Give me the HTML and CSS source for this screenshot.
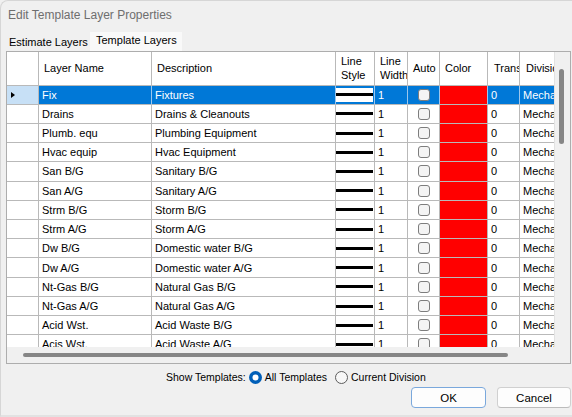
FILE: index.html
```html
<!DOCTYPE html>
<html>
<head>
<meta charset="utf-8">
<link rel="stylesheet" href="styles.css">
</head>
<body>
<div class="window">
  <div class="titlebar">Edit Template Layer Properties</div>
  <div class="tabs">
    <div class="tab">Estimate Layers</div>
    <div class="tab active">Template Layers</div>
  </div>
  <div class="page">
    <div class="grid">
      <div class="table">
        <div class="row head">
          <div class="cell rh"></div>
          <div class="cell">Layer Name</div>
          <div class="cell">Description</div>
          <div class="cell">Line Style</div>
          <div class="cell">Line Width</div>
          <div class="cell">Auto</div>
          <div class="cell">Color</div>
          <div class="cell nw">Transparency</div>
          <div class="cell nw">Division</div>
        </div>
        <div class="row sel">
          <div class="cell rh"><span class="arrow"></span></div>
          <div class="cell">Fix</div>
          <div class="cell">Fixtures</div>
          <div class="cell ls"><div class="lsimg"><span class="line"></span></div></div>
          <div class="cell">1</div>
          <div class="cell auto"><span class="cb"></span></div>
          <div class="cell color"></div>
          <div class="cell">0</div>
          <div class="cell">Mechanical</div>
        </div>
        <div class="row">
          <div class="cell rh"></div>
          <div class="cell">Drains</div>
          <div class="cell">Drains &amp; Cleanouts</div>
          <div class="cell ls"><div class="lsimg"><span class="line"></span></div></div>
          <div class="cell">1</div>
          <div class="cell auto"><span class="cb"></span></div>
          <div class="cell color"></div>
          <div class="cell">0</div>
          <div class="cell">Mechanical</div>
        </div>
        <div class="row">
          <div class="cell rh"></div>
          <div class="cell">Plumb. equ</div>
          <div class="cell">Plumbing Equipment</div>
          <div class="cell ls"><div class="lsimg"><span class="line"></span></div></div>
          <div class="cell">1</div>
          <div class="cell auto"><span class="cb"></span></div>
          <div class="cell color"></div>
          <div class="cell">0</div>
          <div class="cell">Mechanical</div>
        </div>
        <div class="row">
          <div class="cell rh"></div>
          <div class="cell">Hvac equip</div>
          <div class="cell">Hvac Equipment</div>
          <div class="cell ls"><div class="lsimg"><span class="line"></span></div></div>
          <div class="cell">1</div>
          <div class="cell auto"><span class="cb"></span></div>
          <div class="cell color"></div>
          <div class="cell">0</div>
          <div class="cell">Mechanical</div>
        </div>
        <div class="row">
          <div class="cell rh"></div>
          <div class="cell">San B/G</div>
          <div class="cell">Sanitary B/G</div>
          <div class="cell ls"><div class="lsimg"><span class="line"></span></div></div>
          <div class="cell">1</div>
          <div class="cell auto"><span class="cb"></span></div>
          <div class="cell color"></div>
          <div class="cell">0</div>
          <div class="cell">Mechanical</div>
        </div>
        <div class="row">
          <div class="cell rh"></div>
          <div class="cell">San A/G</div>
          <div class="cell">Sanitary A/G</div>
          <div class="cell ls"><div class="lsimg"><span class="line"></span></div></div>
          <div class="cell">1</div>
          <div class="cell auto"><span class="cb"></span></div>
          <div class="cell color"></div>
          <div class="cell">0</div>
          <div class="cell">Mechanical</div>
        </div>
        <div class="row">
          <div class="cell rh"></div>
          <div class="cell">Strm B/G</div>
          <div class="cell">Storm B/G</div>
          <div class="cell ls"><div class="lsimg"><span class="line"></span></div></div>
          <div class="cell">1</div>
          <div class="cell auto"><span class="cb"></span></div>
          <div class="cell color"></div>
          <div class="cell">0</div>
          <div class="cell">Mechanical</div>
        </div>
        <div class="row">
          <div class="cell rh"></div>
          <div class="cell">Strm A/G</div>
          <div class="cell">Storm A/G</div>
          <div class="cell ls"><div class="lsimg"><span class="line"></span></div></div>
          <div class="cell">1</div>
          <div class="cell auto"><span class="cb"></span></div>
          <div class="cell color"></div>
          <div class="cell">0</div>
          <div class="cell">Mechanical</div>
        </div>
        <div class="row">
          <div class="cell rh"></div>
          <div class="cell">Dw B/G</div>
          <div class="cell">Domestic water B/G</div>
          <div class="cell ls"><div class="lsimg"><span class="line"></span></div></div>
          <div class="cell">1</div>
          <div class="cell auto"><span class="cb"></span></div>
          <div class="cell color"></div>
          <div class="cell">0</div>
          <div class="cell">Mechanical</div>
        </div>
        <div class="row">
          <div class="cell rh"></div>
          <div class="cell">Dw A/G</div>
          <div class="cell">Domestic water A/G</div>
          <div class="cell ls"><div class="lsimg"><span class="line"></span></div></div>
          <div class="cell">1</div>
          <div class="cell auto"><span class="cb"></span></div>
          <div class="cell color"></div>
          <div class="cell">0</div>
          <div class="cell">Mechanical</div>
        </div>
        <div class="row">
          <div class="cell rh"></div>
          <div class="cell">Nt-Gas B/G</div>
          <div class="cell">Natural Gas B/G</div>
          <div class="cell ls"><div class="lsimg"><span class="line"></span></div></div>
          <div class="cell">1</div>
          <div class="cell auto"><span class="cb"></span></div>
          <div class="cell color"></div>
          <div class="cell">0</div>
          <div class="cell">Mechanical</div>
        </div>
        <div class="row">
          <div class="cell rh"></div>
          <div class="cell">Nt-Gas A/G</div>
          <div class="cell">Natural Gas A/G</div>
          <div class="cell ls"><div class="lsimg"><span class="line"></span></div></div>
          <div class="cell">1</div>
          <div class="cell auto"><span class="cb"></span></div>
          <div class="cell color"></div>
          <div class="cell">0</div>
          <div class="cell">Mechanical</div>
        </div>
        <div class="row">
          <div class="cell rh"></div>
          <div class="cell">Acid Wst.</div>
          <div class="cell">Acid Waste B/G</div>
          <div class="cell ls"><div class="lsimg"><span class="line"></span></div></div>
          <div class="cell">1</div>
          <div class="cell auto"><span class="cb"></span></div>
          <div class="cell color"></div>
          <div class="cell">0</div>
          <div class="cell">Mechanical</div>
        </div>
        <div class="row">
          <div class="cell rh"></div>
          <div class="cell">Acis Wst.</div>
          <div class="cell">Acid Waste A/G</div>
          <div class="cell ls"><div class="lsimg"><span class="line"></span></div></div>
          <div class="cell">1</div>
          <div class="cell auto"><span class="cb"></span></div>
          <div class="cell color"></div>
          <div class="cell">0</div>
          <div class="cell">Mechanical</div>
        </div>
      </div>
      <div class="vscroll"><div class="vthumb"></div></div>
      <div class="hscroll"><div class="hthumb"></div></div>
      <div class="corner"></div>
    </div>
  </div>
  <div class="options">
    <span class="opt-label">Show Templates:</span>
    <span class="radio checked"><svg width="13" height="13" viewBox="0 0 13 13"><circle cx="6.5" cy="6.5" r="6.5" fill="#005fb8"/><circle cx="6.5" cy="6.5" r="3" fill="#ffffff"/></svg></span>
    <span class="radio-label">All Templates</span>
    <span class="radio"><svg width="13" height="13" viewBox="0 0 13 13"><circle cx="6.5" cy="6.5" r="6" fill="#f7f7f7" stroke="#5c5c5c" stroke-width="1"/></svg></span>
    <span class="radio-label">Current Division</span>
  </div>
  <div class="buttons">
    <div class="btn default">OK</div>
    <div class="btn">Cancel</div>
  </div>
</div>
</body>
</html>
```

FILE: styles.css
```css
html, body {
  margin: 0;
  padding: 0;
  background: #f0f0f0;
}

.window {
  width: 572px;
  height: 417px;
  box-sizing: border-box;
  background: #f0f0f0;
  font-family: "Liberation Sans", Arial, sans-serif;
  font-size: 11px;
  color: #000;
  border-left: 1px solid #d6d6d6;
  border-top: 1px solid #d6d6d6;
  border-top-left-radius: 8px;
  border-bottom: 2px solid #e2e2e2;
  overflow: hidden;
}

.titlebar {
  height: 29px;
  line-height: 29px;
  padding-left: 7px;
  font-size: 12px;
  color: #6e6e6e;
}

.tabs {
  height: 21px;
  display: flex;
  align-items: flex-end;
  padding-left: 3px;
}

.tab {
  width: 86px;
  height: 18px;
  line-height: 18px;
  padding-left: 5px;
  box-sizing: border-box;
  white-space: nowrap;
}

.tab.active {
  width: 92px;
  height: 19px;
  line-height: 17px;
  padding-left: 6px;
  background: #f9f9f9;
}

.page {
  padding-left: 5px;
}

.grid {
  width: 565px;
  height: 313px;
  box-sizing: border-box;
  border: 1px solid #adadad;
  display: grid;
  grid-template-columns: 547px 16px;
  grid-template-rows: 295px 16px;
  background: #f0f0f0;
}

.table {
  overflow: hidden;
  background: #fff;
}

.row {
  display: grid;
  grid-template-columns: 32px 113px 184px 39px 33px 32px 48px 32px 120px;
  height: 19.23px;
}

.row.head {
  height: 33.5px;
}

.cell {
  box-sizing: border-box;
  border-right: 1px solid #b9b9b9;
  border-bottom: 1px solid #b9b9b9;
  padding-left: 3px;
  white-space: nowrap;
  overflow: hidden;
  display: flex;
  align-items: center;
  background: #fff;
}

.head .cell {
  padding-left: 5px;
  white-space: normal;
  line-height: 14px;
}

.head .cell.nw {
  white-space: nowrap;
  padding-left: 6px;
}

.cell.rh {
  padding-left: 0;
}

.sel .cell {
  background: #0078d7;
  color: #fff;
  border-right-color: #9cc6ec;
}

.sel .cell.rh {
  background: #c7e0f6;
  border-right-color: #b9b9b9;
}

.arrow {
  display: block;
  width: 0;
  height: 0;
  margin-left: 4px;
  border-top: 3.5px solid transparent;
  border-bottom: 3.5px solid transparent;
  border-left: 4px solid #000;
}

.cell.ls {
  padding: 2px 1px 2px 0;
  align-items: stretch;
}

.lsimg {
  flex: 1;
  background: #fff;
  display: flex;
  align-items: center;
}

.line {
  display: block;
  width: 100%;
  height: 3px;
  background: #000;
}

.cell.auto {
  padding-left: 0;
  justify-content: center;
}

.cb {
  display: block;
  width: 12px;
  height: 12px;
  box-sizing: border-box;
  border: 1px solid #7d7d7d;
  border-radius: 3px;
  background: #f4f4f4;
}

.cell.color,
.sel .cell.color {
  background: #ff0000;
}

.vscroll {
  background: #f0f0f0;
  border-left: 1px solid #e2e2e2;
}

.vthumb {
  width: 5px;
  height: 75px;
  margin: 17px 0 0 4px;
  background: #868686;
  border-radius: 3px;
}

.hscroll {
  background: #f0f0f0;
}

.hthumb {
  width: 485px;
  height: 4px;
  margin: 6px 0 0 16px;
  background: #868686;
  border-radius: 2px;
}

.corner {
  background: #f0f0f0;
}

.options {
  display: flex;
  align-items: center;
  height: 16px;
  margin-top: 5px;
  padding-left: 165px;
  font-size: 10.5px;
}

.radio {
  display: flex;
  width: 13px;
  height: 13px;
}

.opt-label {
  margin-right: 3px;
}

.radio-label {
  margin-left: 3px;
  margin-right: 8px;
}

.buttons {
  display: flex;
  justify-content: flex-end;
  gap: 11px;
  margin-top: 2px;
  padding-right: 1px;
}

.btn {
  width: 74px;
  height: 21px;
  box-sizing: border-box;
  border: 1px solid #d0d0d0;
  border-bottom-color: #bcbcbc;
  border-radius: 4px;
  background: #fdfdfd;
  display: flex;
  align-items: center;
  justify-content: center;
  font-size: 11.5px;
}

.btn.default {
  width: 75px;
  border-color: #7aa8dc;
}
```
